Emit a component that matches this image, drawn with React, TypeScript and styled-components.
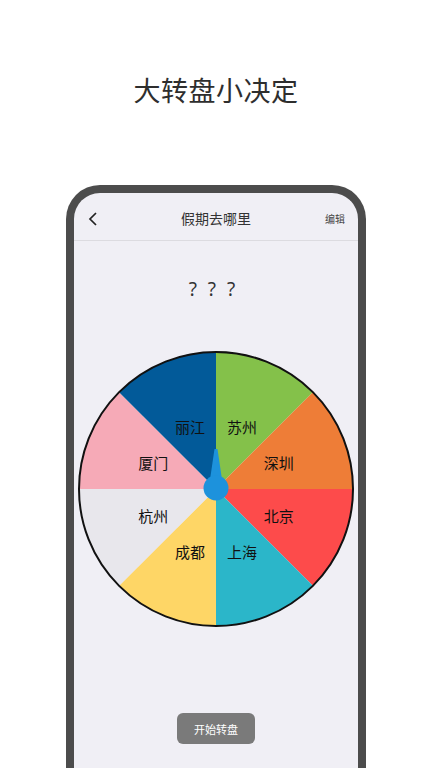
import React from "react";
import styled, { createGlobalStyle } from "styled-components";

const GlobalStyle = createGlobalStyle`
  html, body {
    margin: 0;
    padding: 0;
    background: #ffffff;
    font-family: "Noto Sans CJK SC", "Noto Sans", sans-serif;
  }
`;

const Page = styled.div`
  width: 432px;
  height: 768px;
  overflow: hidden;
  display: flex;
  flex-direction: column;
  align-items: center;
`;

const Heading = styled.h1`
  margin: 72px 0 0;
  font-size: 27px;
  line-height: 36px;
  font-weight: 400;
  color: #2e2e2e;
  letter-spacing: 0.5px;
`;

const Phone = styled.div`
  margin-top: 77px;
  width: 284px;
  height: 620px;
  flex-shrink: 0;
  border: 8px solid #4c4c4c;
  border-bottom: none;
  border-radius: 34px 34px 0 0;
  background: #f0eff5;
  display: flex;
  flex-direction: column;
  align-items: center;
`;

const NavBar = styled.div`
  position: relative;
  width: 100%;
  height: 47px;
  border-bottom: 1px solid #dcdbe0;
  display: flex;
  align-items: center;
  justify-content: center;
  flex-shrink: 0;
`;

const BackButton = styled.div`
  position: absolute;
  left: 13px;
  top: 18px;
  width: 12px;
  height: 16px;
  display: flex;
`;

const NavTitle = styled.div`
  font-size: 14px;
  color: #333333;
  margin-top: 3px;
`;

const NavAction = styled.div`
  position: absolute;
  right: 13px;
  top: 18px;
  font-size: 10px;
  color: #444444;
`;

const Result = styled.div`
  margin-top: 36px;
  margin-right: 8px;
  font-size: 19px;
  line-height: 24px;
  color: #333333;
  word-spacing: 6px;
  font-family: "Noto Sans", sans-serif;
`;

const WheelWrap = styled.div`
  margin-top: 48px;
  width: 280px;
  height: 280px;
  display: flex;
`;

const SpinButton = styled.button`
  margin-top: 84px;
  width: 78px;
  height: 31px;
  border: none;
  border-radius: 6px;
  background: #7a7a7a;
  color: #ffffff;
  font-family: "Noto Sans CJK SC", sans-serif;
  font-size: 11px;
  padding: 0;
`;

const segments = [
  { name: "苏州", color: "#84c14a" },
  { name: "深圳", color: "#ee7d37" },
  { name: "北京", color: "#fd4b4b" },
  { name: "上海", color: "#2bb6c9" },
  { name: "成都", color: "#fed666" },
  { name: "杭州", color: "#e8e7ec" },
  { name: "厦门", color: "#f6aab7" },
  { name: "丽江", color: "#025a99" },
];

const C = 140;
const R = 137;

function point(deg: number, r: number) {
  const a = ((deg - 90) * Math.PI) / 180;
  return [C + r * Math.cos(a), C + r * Math.sin(a)];
}

function Wheel() {
  const step = 360 / segments.length;
  return (
    <svg width="280" height="280" viewBox="0 0 280 280">
      {segments.map((s, i) => {
        const [x1, y1] = point(i * step, R);
        const [x2, y2] = point((i + 1) * step, R);
        return (
          <path
            key={s.name}
            d={`M${C} ${C} L${x1} ${y1} A${R} ${R} 0 0 1 ${x2} ${y2} Z`}
            fill={s.color}
          />
        );
      })}
      <circle cx={C} cy={C} r={R} fill="none" stroke="#111" strokeWidth="2" />
      {segments.map((s, i) => {
        const [x, y] = point(i * step + step / 2, 68);
        return (
          <text
            key={s.name}
            x={x}
            y={y}
            textAnchor="middle"
            dominantBaseline="central"
            fontSize="15"
            fill="#111111"
            fontFamily='"Noto Sans CJK SC", sans-serif'
          >
            {s.name}
          </text>
        );
      })}
      <path d={`M${C - 1.5} 100 L${C + 1.5} 100 L${C + 6.5} ${C - 6} L${C - 6.5} ${C - 6} Z`} fill="#1d92dc" />
      <circle cx={C} cy={C - 1} r="12.5" fill="#1d92dc" />
    </svg>
  );
}

export default function App() {
  return (
    <Page>
      <GlobalStyle />
      <Heading>大转盘小决定</Heading>
      <Phone>
        <NavBar>
          <BackButton>
            <svg width="12" height="16" viewBox="0 0 12 16">
              <path d="M9 2 L3 8 L9 14" fill="none" stroke="#222" strokeWidth="1.7" />
            </svg>
          </BackButton>
          <NavTitle>假期去哪里</NavTitle>
          <NavAction>编辑</NavAction>
        </NavBar>
        <Result>? ? ?</Result>
        <WheelWrap>
          <Wheel />
        </WheelWrap>
        <SpinButton>开始转盘</SpinButton>
      </Phone>
    </Page>
  );
}
